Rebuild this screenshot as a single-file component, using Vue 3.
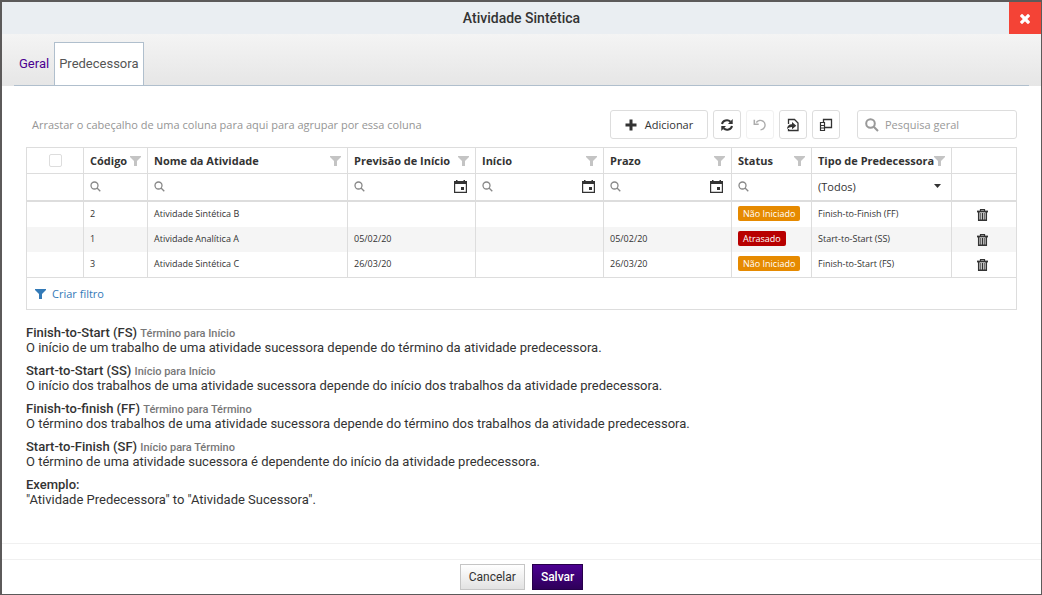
<script setup>
import { ref } from 'vue'

const search = ref('')
const tipo = ref('')

const columns = [
  { key: 'codigo', label: 'Código', filter: 'text', cls: 'c-code' },
  { key: 'nome', label: 'Nome da Atividade', filter: 'text', cls: 'c-name' },
  { key: 'previsao', label: 'Previsão de Início', filter: 'date', cls: 'c-date' },
  { key: 'inicio', label: 'Início', filter: 'date', cls: 'c-date' },
  { key: 'prazo', label: 'Prazo', filter: 'date', cls: 'c-date' },
  { key: 'status', label: 'Status', filter: 'text', cls: 'c-status' },
  { key: 'tipo', label: 'Tipo de Predecessora', filter: 'select', cls: 'c-type' },
]

const rows = [
  { codigo: '2', nome: 'Atividade Sintética B', previsao: '', inicio: '', prazo: '', status: 'Não Iniciado', tipo: 'Finish-to-Finish (FF)' },
  { codigo: '1', nome: 'Atividade Analítica A', previsao: '05/02/20', inicio: '', prazo: '05/02/20', status: 'Atrasado', tipo: 'Start-to-Start (SS)' },
  { codigo: '3', nome: 'Atividade Sintética C', previsao: '26/03/20', inicio: '', prazo: '26/03/20', status: 'Não Iniciado', tipo: 'Finish-to-Start (FS)' },
]

const help = [
  { term: 'Finish-to-Start (FS)', pt: 'Término para Início', text: 'O início de um trabalho de uma atividade sucessora depende do término da atividade predecessora.' },
  { term: 'Start-to-Start (SS)', pt: 'Início para Início', text: 'O início dos trabalhos de uma atividade sucessora depende do início dos trabalhos da atividade predecessora.' },
  { term: 'Finish-to-finish (FF)', pt: 'Término para Término', text: 'O término dos trabalhos de uma atividade sucessora depende do término dos trabalhos da atividade predecessora.' },
  { term: 'Start-to-Finish (SF)', pt: 'Início para Término', text: 'O término de uma atividade sucessora é dependente do início da atividade predecessora.' },
  { term: 'Exemplo:', pt: '', text: '"Atividade Predecessora" to "Atividade Sucessora".' },
]
</script>

<template>
  <div class="backdrop">
    <div class="dialog" role="dialog" aria-labelledby="dlg-title">
      <header class="title-bar">
        <h1 id="dlg-title">Atividade Sintética</h1>
        <button class="close" type="button" aria-label="Fechar">
          <svg width="10" height="10" viewBox="0 0 10 10"><path d="M2 2l6 6M8 2l-6 6" stroke="#fff" stroke-width="3.2" stroke-linecap="square" /></svg>
        </button>
      </header>

      <nav class="tabs">
        <div class="tab-list">
          <a class="tab" href="#geral">Geral</a>
          <a class="tab active" href="#predecessora">Predecessora</a>
        </div>
      </nav>

      <main class="content">
        <div class="toolbar">
          <span class="group-hint">Arrastar o cabeçalho de uma coluna para aqui para agrupar por essa coluna</span>
          <button class="btn add" type="button">
            <svg width="12" height="12" viewBox="0 0 12 12"><path d="M6 .5v11M.5 6h11" stroke="#333" stroke-width="3" /></svg>
            Adicionar
          </button>
          <button class="btn icon" type="button" aria-label="Atualizar">
            <svg width="14" height="14" viewBox="0 0 14 14" fill="none" stroke="#333" stroke-width="2"><path d="M2 6a5 4.600 0 0 1 8.500-2.300M12 8a5 4.600 0 0 1-8.500 2.300" /><path d="M12.700 1v5H8zM1.300 13V8H6z" fill="#333" stroke="none" /></svg>
          </button>
          <button class="btn icon" type="button" aria-label="Desfazer" disabled>
            <svg width="14" height="14" viewBox="0 0 14 14" fill="none"><path d="M3.300 4.500C5 2.300 8 1.800 10.200 3.300c2.300 1.700 2.500 5 .6 7-.9 1-2 1.500-3.300 1.600" stroke="#333" stroke-width="1.400" /><path d="M1.300 1.800v4.400h4.400" stroke="#333" stroke-width="1.500" /></svg>
          </button>
          <button class="btn icon" type="button" aria-label="Exportar">
            <svg width="14" height="14" viewBox="0 0 14 14" fill="none"><path d="M2.500 6V1.500h6l3.500 3.500v7.500H2.500V11" stroke="#333" stroke-width="1.300" /><path d="M1 11c.4-3.500 2.500-4.800 5-4.800V4l4.300 3.700L6 11.200V9C4 9 2.500 9.700 1 11z" fill="#333" /></svg>
          </button>
          <button class="btn icon" type="button" aria-label="Seletor de colunas">
            <svg width="14" height="14" viewBox="0 0 14 14" fill="none" stroke="#333"><path d="M1.500 4.500h4v8h-4zM1.500 7.500h4M1.500 10h4" stroke-width="1.200" /><path d="M4.500 4.500v-3h8v8h-7" stroke-width="1.300" /></svg>
          </button>
          <label class="search">
            <svg width="14" height="14" viewBox="0 0 14 14" fill="none" stroke="#999" stroke-width="2"><circle cx="5.500" cy="5.500" r="4.300" /><path d="M8.700 8.700l4.300 4.300" /></svg>
            <input v-model="search" type="text" placeholder="Pesquisa geral" aria-label="Pesquisa geral">
          </label>
        </div>

        <div class="grid">
          <table>
            <colgroup>
              <col class="c-check">
              <col v-for="c in columns" :key="c.key" :class="c.cls">
              <col class="c-action">
            </colgroup>
            <thead>
              <tr class="head">
                <th class="center"><input class="check" type="checkbox" aria-label="Selecionar tudo"></th>
                <th v-for="c in columns" :key="c.key">
                  <div class="th">
                    <span>{{ c.label }}</span>
                    <svg width="11" height="10" viewBox="0 0 11 10"><path d="M0 0h11v1L7 5v5H4V5L0 1z" fill="#c4c4c4" /></svg>
                  </div>
                </th>
                <th></th>
              </tr>
              <tr class="filters">
                <td></td>
                <td v-for="c in columns" :key="c.key">
                  <div v-if="c.filter === 'select'" class="select">
                    <select v-model="tipo" aria-label="Tipo de Predecessora">
                      <option value="">(Todos)</option>
                      <option>Finish-to-Start (FS)</option>
                      <option>Start-to-Start (SS)</option>
                      <option>Finish-to-Finish (FF)</option>
                    </select>
                    <svg width="7" height="4" viewBox="0 0 7 4"><path d="M0 0h7L3.500 4z" fill="#333" /></svg>
                  </div>
                  <div v-else class="filter">
                    <svg width="11" height="11" viewBox="0 0 11 11" fill="none" stroke="#888" stroke-width="1.300"><circle cx="4.500" cy="4.500" r="3.500" /><path d="M7 7l3.300 3.300" /></svg>
                    <input type="text" :aria-label="'Filtrar ' + c.label">
                    <button v-if="c.filter === 'date'" class="plain" type="button" :aria-label="'Calendário ' + c.label">
                      <svg width="13" height="13" viewBox="0 0 13 13"><path d="M.6 1.500h11.800v10.900H.6z" fill="none" stroke="#333" stroke-width="1.200" /><path d="M0 1h2V0h1.500v1h6V0H11v1h2v3H0zM7 7h3v3H7z" fill="#333" /></svg>
                    </button>
                  </div>
                </td>
                <td></td>
              </tr>
            </thead>
            <tbody>
              <tr v-for="r in rows" :key="r.codigo">
                <td></td>
                <td v-for="c in columns" :key="c.key">
                  <span v-if="c.key === 'status'" class="badge" :class="{ late: r.status === 'Atrasado' }">{{ r.status }}</span>
                  <template v-else>{{ r[c.key] }}</template>
                </td>
                <td class="center">
                  <button class="plain trash" type="button" aria-label="Excluir">
                    <svg width="11" height="12" viewBox="0 0 11 12" fill="none" stroke="#333"><path d="M3.500 2V.6h4V2" stroke-width="1.200" /><path d="M0 2.500h11" stroke-width="1.800" /><path d="M1.700 3v8.300h7.600V3" stroke-width="1.500" /><path d="M3.800 4v7M5.500 4v7M7.200 4v7" stroke-width="1" /></svg>
                  </button>
                </td>
              </tr>
            </tbody>
          </table>
          <div class="filter-panel">
            <button class="plain create" type="button">
              <svg width="11" height="10" viewBox="0 0 11 10"><path d="M0 0h11v1L7 5v5H4V5L0 1z" fill="#337ab7" /></svg>
              Criar filtro
            </button>
          </div>
        </div>

        <section class="help">
          <p v-for="h in help" :key="h.term">
            <strong>{{ h.term }}</strong>{{ ' ' }}<small v-if="h.pt">{{ h.pt }}</small><br>{{ h.text }}
          </p>
        </section>
      </main>

      <div class="strip"></div>
      <footer class="actions">
        <button class="action" type="button">Cancelar</button>
        <button class="action primary" type="button">Salvar</button>
      </footer>
    </div>
  </div>
</template>

<style>
body {
  margin: 0;
  background: #555;
}
</style>

<style scoped>
* {
  box-sizing: border-box;
}
.backdrop {
  display: flex;
  min-height: 100vh;
  padding: 2px 1px 1px 2px;
  background: #5c5a5a;
  font-family: Roboto, "Liberation Sans", sans-serif;
  font-size: 13px;
  line-height: 15px;
  color: #333;
}
.dialog {
  display: flex;
  flex: 1;
  flex-direction: column;
  min-width: 0;
  background: #fff;
}
svg {
  display: block;
  flex: none;
}
button,
input,
select {
  font: inherit;
  color: inherit;
}
button {
  cursor: pointer;
}
.title-bar {
  display: grid;
  grid-template-columns: 32px 1fr 32px;
  height: 32px;
  background: #eaeef2;
}
.title-bar h1 {
  grid-column: 2;
  margin: 0;
  font-size: 14px;
  font-weight: 500;
  line-height: 32px;
  text-align: center;
}
.close {
  display: flex;
  align-items: center;
  justify-content: center;
  padding: 2px 0 0;
  border: 0;
  background: #f44336;
}
.tabs {
  padding: 8px 12px 0;
  background: linear-gradient(#f4f4f4, #e6e6e6);
}
.tab-list {
  display: flex;
  height: 44px;
  border-bottom: 1px solid #b0bfcd;
}
.tab {
  padding: 0 4px;
  border: 1px solid transparent;
  border-bottom: 0;
  line-height: 42px;
  color: #4b0091;
  text-decoration: none;
}
.tab.active {
  border-color: #b0bfcd;
  background: #fff;
  color: #555;
}
.content {
  flex: 1;
  padding: 24px 24px 0;
}
.toolbar,
.grid {
  font-family: "Open Sans", "Noto Sans", sans-serif;
  font-size: 11px;
}
.toolbar {
  display: flex;
  align-items: center;
  gap: 5px;
  margin-bottom: 8px;
}
.group-hint {
  flex: 1;
  padding-left: 6px;
  color: #959595;
}
.btn {
  display: flex;
  align-items: center;
  justify-content: center;
  gap: 8px;
  height: 29px;
  padding: 0;
  border: 1px solid #ddd;
  border-radius: 3px;
  background: #fff;
}
.add {
  width: 98px;
}
.icon {
  width: 28px;
}
.btn:disabled {
  opacity: 0.4;
}
.search {
  display: flex;
  align-items: center;
  gap: 6px;
  width: 160px;
  height: 29px;
  margin-left: 12px;
  padding: 0 7px;
  border: 1px solid #ddd;
  border-radius: 3px;
}
.search input,
.filter input {
  flex: 1;
  min-width: 0;
  width: 0;
  padding: 0;
  border: 0;
  outline: 0;
  background: none;
}
.search input::placeholder {
  color: #999;
}
.grid {
  border: 1px solid #ddd;
}
table {
  width: 100%;
  table-layout: fixed;
  border-collapse: separate;
  border-spacing: 0;
}
.c-check {
  width: 57px;
}
.c-code {
  width: 64px;
}
.c-date {
  width: 128px;
}
.c-status {
  width: 80px;
}
.c-type {
  width: 140px;
}
.c-action {
  width: 64px;
}
th,
td {
  height: 25px;
  padding: 0 6px;
  border-right: 1px solid #ddd;
  font-size: 9px;
  text-align: left;
  white-space: nowrap;
}
td {
  padding-bottom: 2px;
}
th:last-child,
td:last-child {
  border-right: 0;
}
.head th {
  height: 26px;
  border-bottom: 1px solid #ddd;
  font-size: 11px;
  font-weight: 700;
}
.filters td {
  height: 28px;
  border-bottom: 2px solid #ddd;
  font-size: 11px;
}
.th,
.filter,
.select {
  display: flex;
  align-items: center;
}
.th {
  justify-content: space-between;
}
.filter {
  gap: 4px;
}
.filter .plain {
  padding-right: 2px;
}
.center {
  padding: 0;
  text-align: center;
}
td.center {
  padding-right: 4px;
}
.check {
  display: block;
  width: 13px;
  height: 13px;
  margin: 0 auto;
  border: 1px solid #ddd;
  border-radius: 2px;
  background: #fff;
  appearance: none;
}
.select {
  display: grid;
  grid-template-columns: 1fr 11px;
}
.select select {
  grid-row: 1;
  grid-column: 1 / -1;
  padding: 0;
  border: 0;
  outline: 0;
  background: none;
  appearance: none;
}
.select svg {
  grid-row: 1;
  grid-column: 2;
  pointer-events: none;
}
tbody tr:nth-child(even) {
  background: #f5f5f5;
}
.badge {
  display: inline-block;
  padding: 0 5px;
  border-radius: 2px;
  background: #e68a00;
  line-height: 15px;
  color: #fff;
}
.badge.late {
  background: #b80000;
}
.plain {
  padding: 0;
  border: 0;
  background: none;
}
.trash {
  display: block;
  margin: 1px auto 0;
}
.filter-panel {
  display: flex;
  align-items: center;
  height: 32px;
  padding: 0 8px;
  border-top: 1px solid #ddd;
}
.create {
  display: flex;
  align-items: center;
  gap: 6px;
  color: #337ab7;
}
.help {
  padding-top: 15px;
}
.help p {
  margin: 0 0 8px;
}
.help strong {
  font-weight: 500;
}
.help small {
  font-size: 11px;
  font-weight: 500;
  line-height: 11px;
  color: #777;
}
.strip {
  height: 17px;
  border-top: 1px solid #f0f0f0;
  border-bottom: 1px solid #f0f0f0;
}
.actions {
  display: flex;
  justify-content: center;
  gap: 7px;
  padding: 4px 0;
}
.action {
  height: 26px;
  padding: 0 8px;
  border: 1px solid #c5c5c5;
  background: linear-gradient(#fff, #e2e2e2);
  font-size: 12px;
}
.action.primary {
  border-color: #26004a;
  background: linear-gradient(#4b0091, #2e0059);
  font-weight: 500;
  color: #fff;
}
</style>
